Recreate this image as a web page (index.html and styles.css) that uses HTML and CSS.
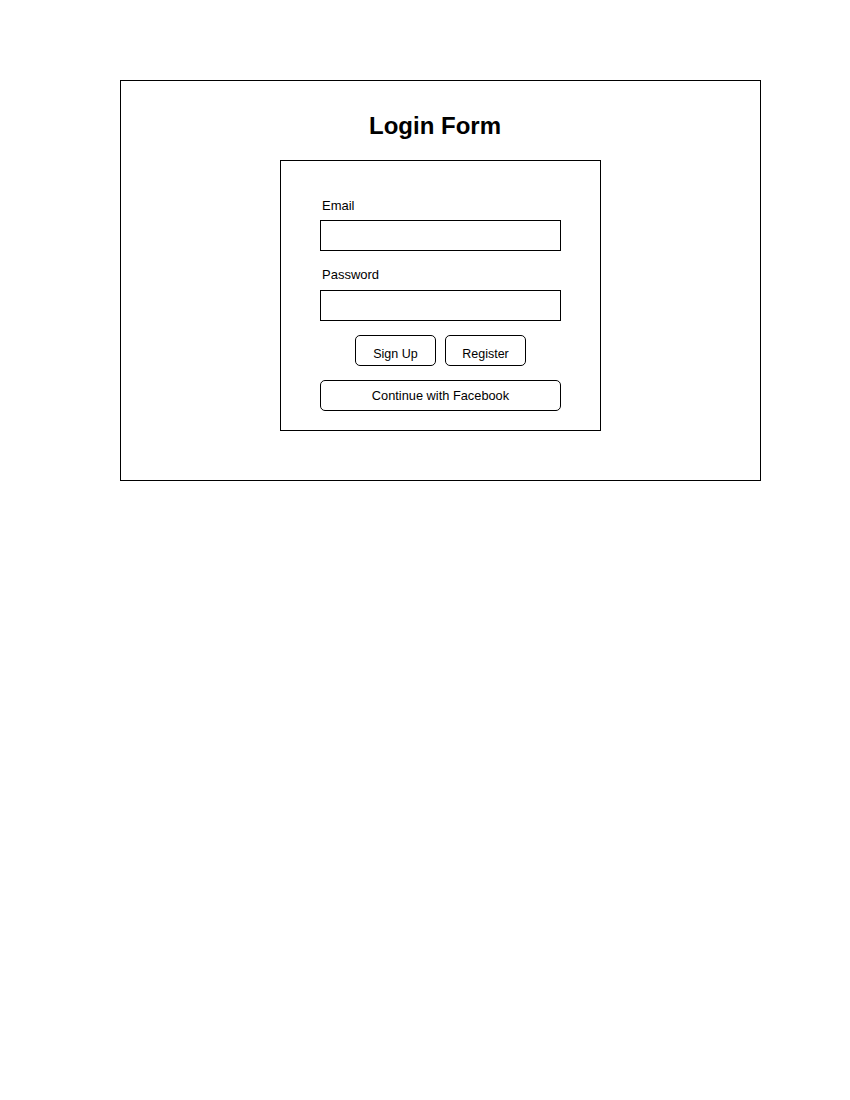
FILE: index.html
```html
<!DOCTYPE html>
<html lang="en">
<head>
<meta charset="utf-8">
<title>Login Form</title>
<link rel="stylesheet" href="styles.css">
</head>
<body>
<div class="frame">
  <h1 class="title">Login Form</h1>
  <form class="card">
    <label class="label" for="email">Email</label>
    <input class="field" id="email" type="text">
    <label class="label label-pw" for="password">Password</label>
    <input class="field" id="password" type="password">
    <div class="actions">
      <button class="btn btn-small" type="button">Sign Up</button>
      <button class="btn btn-small" type="button">Register</button>
    </div>
    <button class="btn btn-wide" type="button">Continue with Facebook</button>
  </form>
</div>
</body>
</html>
```
FILE: styles.css
```css
* { box-sizing: border-box; }
html, body { margin: 0; padding: 0; background: #fff; }
body {
  font-family: "Liberation Sans", Arial, Helvetica, sans-serif;
  color: #000;
}
.frame {
  margin: 80px 0 0 120px;
  width: 641px;
  border: 1px solid #000;
  padding: 33px 0 49px 0;
}
.title {
  margin: 0 0 22px 0;
  padding-right: 11px;
  font-size: 24px;
  line-height: 24px;
  font-weight: bold;
  text-align: center;
}
.card {
  margin: 0 0 0 159px;
  width: 321px;
  border: 1px solid #000;
  padding: 37px 39px 19px 39px;
  display: flex;
  flex-direction: column;
}
.label {
  display: block;
  font-size: 13px;
  line-height: 15px;
  padding-left: 2px;
  margin-bottom: 7px;
}
.label-pw {
  margin-top: 16px;
  margin-bottom: 8px;
}
.field {
  display: block;
  width: 241px;
  height: 31px;
  margin: 0;
  border: 1px solid #000;
  border-radius: 0;
  padding: 0 6px;
  font: inherit;
  background: #fff;
  outline: none;
}
.actions {
  display: flex;
  justify-content: center;
  gap: 9px;
  margin-top: 14px;
}
.btn {
  display: flex;
  align-items: center;
  justify-content: center;
  margin: 0;
  height: 31px;
  border: 1px solid #000;
  border-radius: 5px;
  background: #fff;
  color: #000;
  font-family: "Liberation Sans", Arial, Helvetica, sans-serif;
  cursor: pointer;
}
.btn-small {
  width: 81px;
  font-size: 12.5px;
  padding: 6px 0 0 0;
}
.btn-wide {
  width: 241px;
  margin-top: 14px;
  font-size: 12.8px;
  padding: 0 0 1px 0;
}
```
